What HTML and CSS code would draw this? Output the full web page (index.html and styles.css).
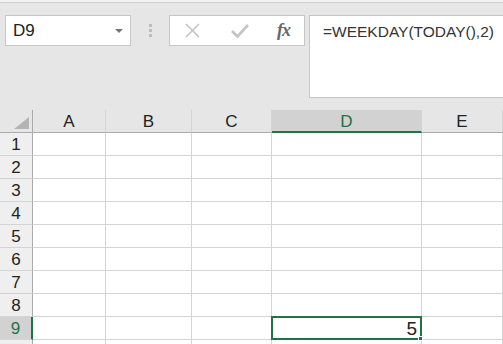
FILE: index.html
```html
<!DOCTYPE html>
<html>

<head>
    <meta charset="utf-8" />
    <title>WEEKDAY</title>
    <link rel="stylesheet" href="styles.css">
</head>

<body>
    <div class="toolbar">
        <div class="namebox">
            <span class="name">D9</span>
            <span class="caret"></span>
        </div>
        <div class="grip"><i></i><i></i><i></i></div>
        <div class="fxbox">
            <svg class="icon" width="20" height="20" viewBox="0 0 20 20">
                <path d="M3 3 L16 16 M16 3 L3 16" stroke="#c4c4c4" stroke-width="1.6" fill="none" />
            </svg>
            <svg class="icon" width="20" height="20" viewBox="0 0 20 20">
                <path d="M2 10 L7.5 15.5 L18 4" stroke="#c4c4c4" stroke-width="2.6" fill="none" />
            </svg>
            <span class="fx">fx</span>
        </div>
        <div class="formula">=WEEKDAY(TODAY(),2)</div>
    </div>

    <div class="sheet">
        <div class="corner"><span class="tri"></span></div>
        <div class="colhead">A</div>
        <div class="colhead">B</div>
        <div class="colhead">C</div>
        <div class="colhead active">D</div>
        <div class="colhead">E</div>

        <div class="rowhead">1</div><div class="cell"></div><div class="cell"></div><div class="cell"></div><div class="cell"></div><div class="cell"></div>
        <div class="rowhead">2</div><div class="cell"></div><div class="cell"></div><div class="cell"></div><div class="cell"></div><div class="cell"></div>
        <div class="rowhead">3</div><div class="cell"></div><div class="cell"></div><div class="cell"></div><div class="cell"></div><div class="cell"></div>
        <div class="rowhead">4</div><div class="cell"></div><div class="cell"></div><div class="cell"></div><div class="cell"></div><div class="cell"></div>
        <div class="rowhead">5</div><div class="cell"></div><div class="cell"></div><div class="cell"></div><div class="cell"></div><div class="cell"></div>
        <div class="rowhead">6</div><div class="cell"></div><div class="cell"></div><div class="cell"></div><div class="cell"></div><div class="cell"></div>
        <div class="rowhead">7</div><div class="cell"></div><div class="cell"></div><div class="cell"></div><div class="cell"></div><div class="cell"></div>
        <div class="rowhead">8</div><div class="cell"></div><div class="cell"></div><div class="cell"></div><div class="cell"></div><div class="cell"></div>
        <div class="rowhead active">9</div><div class="cell"></div><div class="cell"></div><div class="cell"></div><div class="cell selected">5<span class="handle"></span></div><div class="cell"></div>
        <div class="rowhead"></div><div class="cell"></div><div class="cell"></div><div class="cell"></div><div class="cell"></div><div class="cell"></div>
    </div>
</body>

</html>
```

FILE: styles.css
```css
:root {
    --bg: #e6e6e6;
    --box-border: #c6c6c6;
    --grid-line: #d4d4d4;
    --head-line: #ababab;
    --green: #217346;
    --active-head: #d2d2d2;
}

* {
    margin: 0;
    padding: 0;
    box-sizing: border-box;
}

html {
    height: 100%;
    font-family: "Liberation Sans", "Noto Sans", sans-serif;
}

body {
    background-color: var(--bg);
    height: 100%;
    overflow: hidden;
    border-top: 2px solid #f2f2f2;
}

.toolbar {
    height: 108px;
    border-top: 1px solid #d0d0d0;
    padding: 12px 0 0 5px;
    display: flex;
    align-items: flex-start;
}

.toolbar>div {
    flex-shrink: 0;
}

.namebox {
    width: 126px;
    height: 31px;
    background-color: white;
    border: 1px solid var(--box-border);
    display: flex;
    align-items: center;
    justify-content: space-between;
    padding: 0 7px 0 7px;
}

.namebox .name {
    font-size: 17px;
    color: #222;
}

.caret {
    width: 0;
    height: 0;
    border-left: 4px solid transparent;
    border-right: 4px solid transparent;
    border-top: 4px solid #777;
}

.grip {
    width: 38px;
    height: 31px;
    display: flex;
    flex-direction: column;
    align-items: center;
    justify-content: center;
    gap: 2px;
}

.grip i {
    width: 3px;
    height: 3px;
    background-color: #bdbdbd;
}

.fxbox {
    width: 136px;
    height: 31px;
    background-color: white;
    border: 1px solid var(--box-border);
    display: flex;
    align-items: center;
    justify-content: space-between;
    padding: 0 14px 0 13px;
}

.fx {
    font-family: "Liberation Serif", serif;
    font-style: italic;
    font-weight: bold;
    font-size: 18px;
    color: #666;
    letter-spacing: -1px;
}

.toolbar>.formula {
    flex: 1 1 0;
    min-width: 0;
    height: 83px;
    margin-left: 4px;
    background-color: white;
    border: 1px solid var(--box-border);
    border-right: none;
    padding: 7px 0 0 13px;
    font-size: 15.5px;
    color: #333;
    white-space: nowrap;
}

.sheet {
    display: grid;
    grid-template-columns: 33px 73px 86px 80px 150px 1fr;
    grid-auto-rows: 23px;
}

.sheet>div {
    display: flex;
    align-items: center;
    justify-content: center;
    font-size: 17px;
    color: #222;
}

.corner {
    border-right: 1px solid var(--head-line);
    border-bottom: 1px solid var(--head-line);
    justify-content: flex-end !important;
    align-items: flex-end !important;
    padding: 0 3px 3px 0;
}

.tri {
    width: 15px;
    height: 12px;
    background-color: #b4b4b4;
    clip-path: polygon(100% 0, 100% 100%, 0 100%);
}

.colhead {
    border-right: 1px solid var(--grid-line);
    border-bottom: 1px solid var(--head-line);
    padding-top: 2px;
}

.colhead.active {
    background-color: var(--active-head);
    color: var(--green) !important;
    border-bottom: 2px solid var(--green);
}

.rowhead {
    background-color: #efefef;
    border-right: 1px solid var(--head-line);
    border-bottom: 1px solid var(--grid-line);
    padding-top: 2px;
}

.rowhead.active {
    background-color: var(--active-head);
    color: var(--green) !important;
    border-right: 2px solid var(--green);
}

.cell {
    background-color: white;
    border-right: 1px solid var(--grid-line);
    border-bottom: 1px solid var(--grid-line);
}

.cell.selected {
    position: relative;
    border: 2px solid var(--green);
    margin: -1px 0 0 -1px;
    justify-content: flex-end !important;
    padding: 1px 3px 0 0;
    font-size: 19px;
}

.handle {
    position: absolute;
    right: -3px;
    bottom: -3px;
    width: 5px;
    height: 5px;
    background-color: var(--green);
    border: 1px solid white;
}
```
